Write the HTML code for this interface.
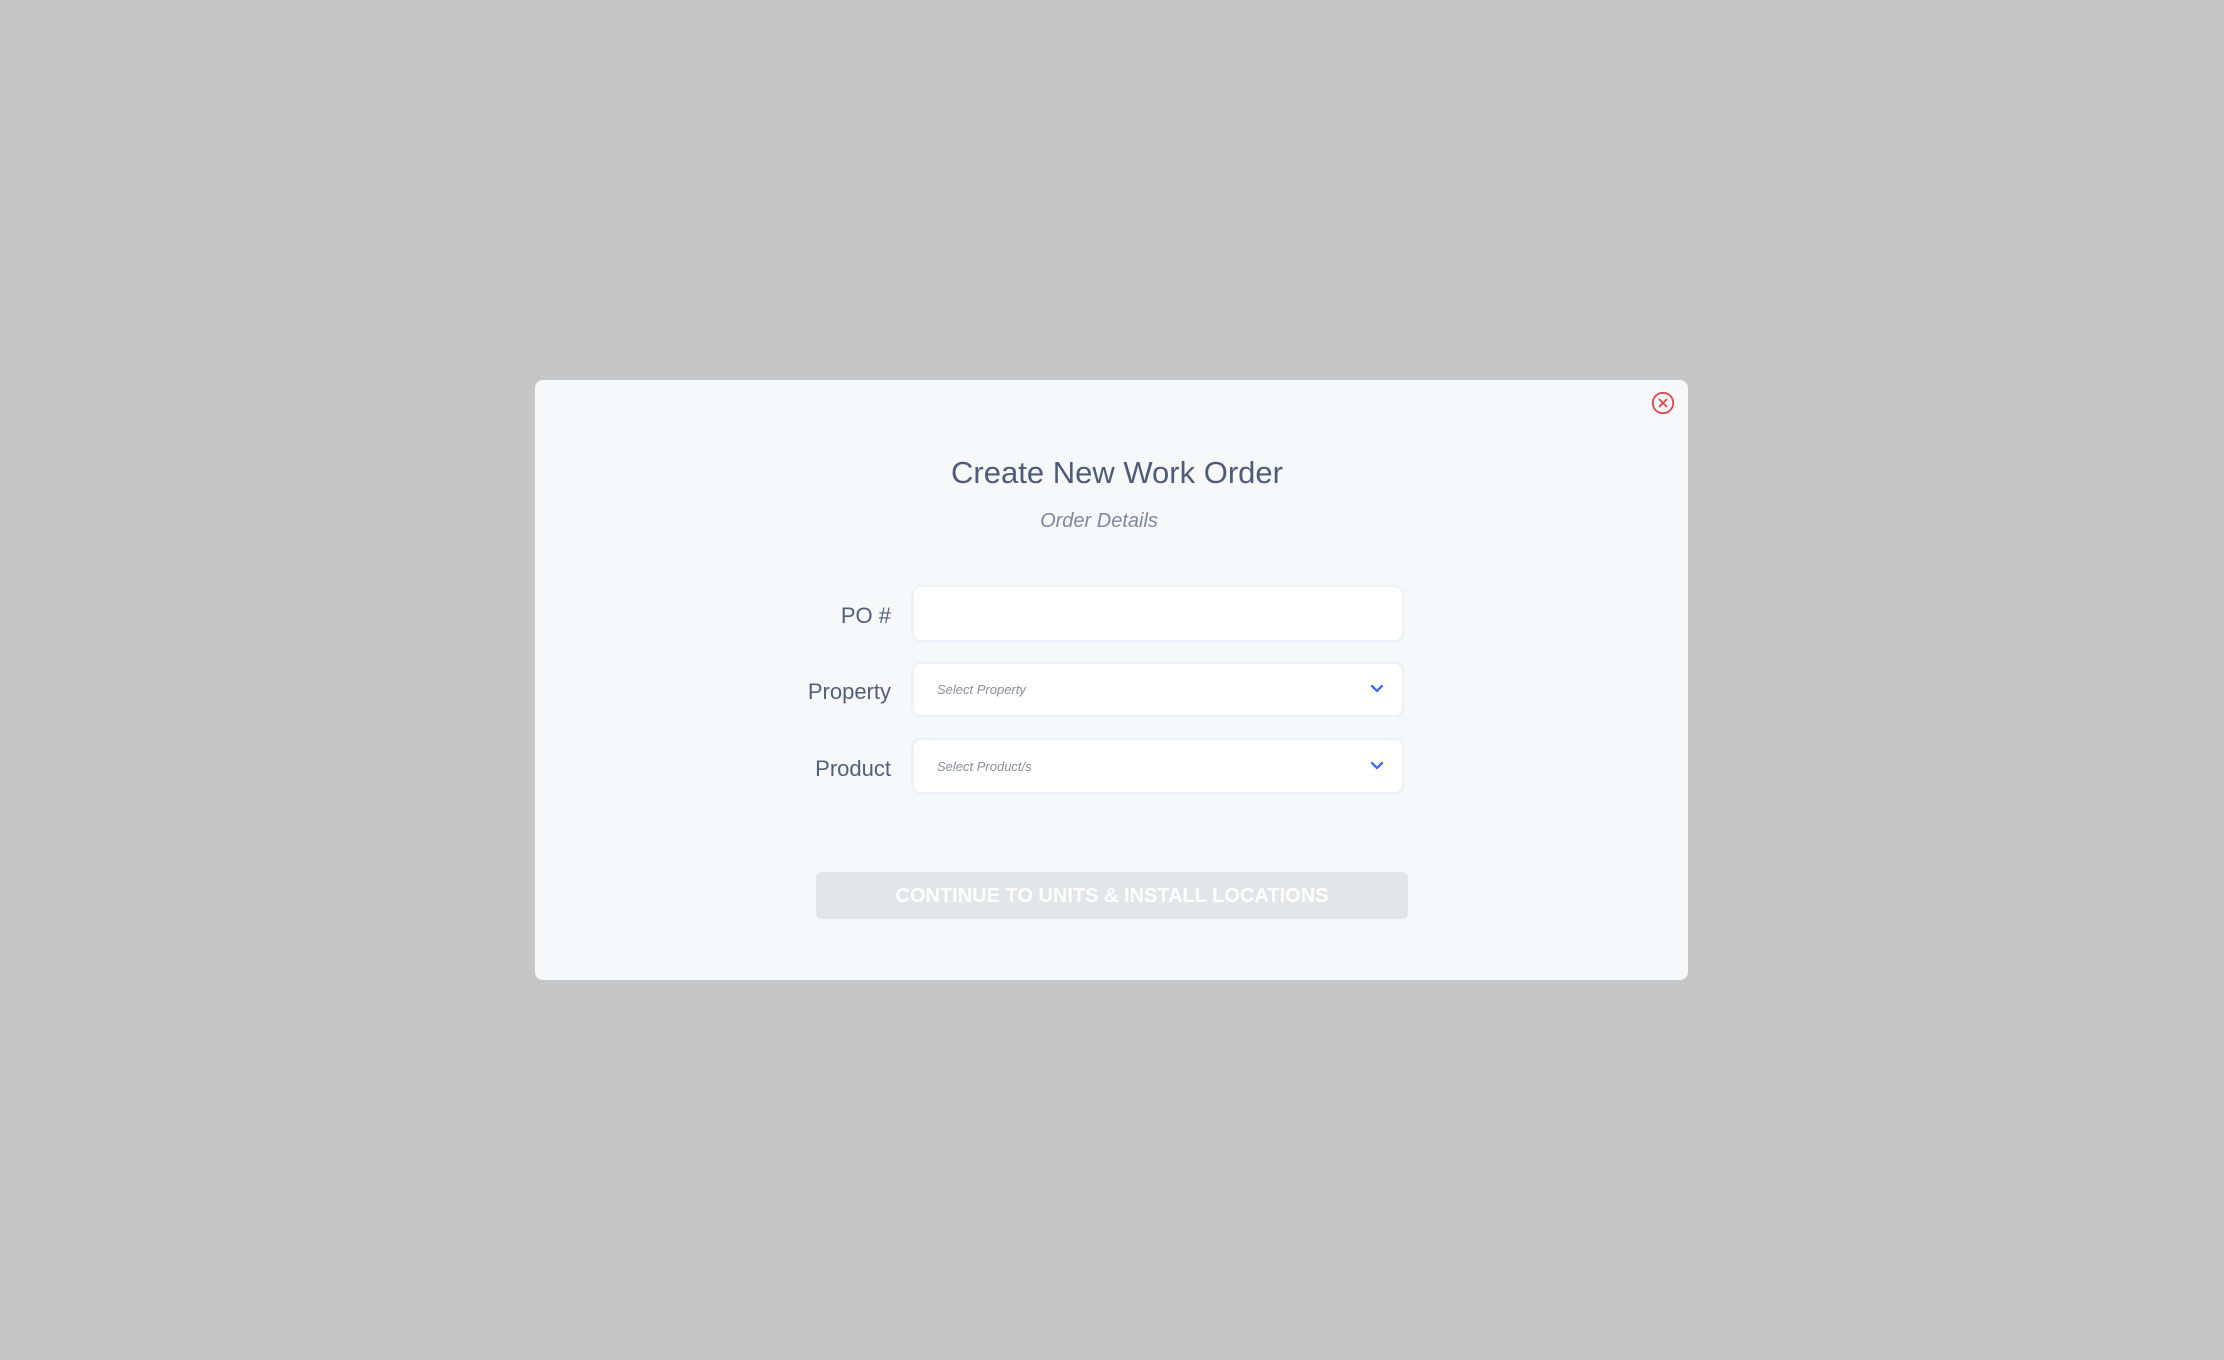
<!DOCTYPE html>
<html><head><meta charset="utf-8"><style>
html,body{margin:0;padding:0;}
body{width:2224px;height:1360px;background:#c6c6c6;position:relative;overflow:hidden;font-family:"Liberation Sans",sans-serif;}
.modal{position:absolute;left:535px;top:380px;width:1153px;height:600px;background:#f7f8fa;border-radius:8px;}
.abs{position:absolute;}
.title{top:455px;text-align:center;font-size:31px;color:#4f5b78;}
.sub{top:510px;text-align:center;font-size:20px;font-style:italic;color:#8088a0;}
.lbl{right:1333px;font-size:22px;color:#535f7a;text-align:right;}
.inp{left:914px;width:488px;background:#fff;border-radius:7px;box-shadow:0 0 3px 1px #e0ebf6;}
.ph{position:absolute;left:23px;font-size:13px;font-style:italic;color:#8a8f9c;}
.chev{position:absolute;left:1363px;}
.btn{left:816px;top:872px;width:592px;height:47px;background:#e3e6e9;border-radius:6px;color:#fff;font-weight:bold;font-size:20px;text-align:center;line-height:49px;letter-spacing:0px;}
</style></head><body>
<div class="modal"></div>
<svg class="abs" style="left:1651px;top:391px" width="24" height="24" viewBox="0 0 24 24"><circle cx="12" cy="12" r="10.2" fill="none" stroke="#e0424b" stroke-width="1.8"/><path d="M8.5 8.5L15.5 15.5M15.5 8.5L8.5 15.5" stroke="#e0424b" stroke-width="1.8" stroke-linecap="round"/></svg>
<div class="abs title" style="left:0;width:2234px">Create New Work Order</div>
<div class="abs sub" style="left:0;width:2198px">Order Details</div>
<div class="abs lbl" style="top:603px">PO #</div>
<div class="abs lbl" style="top:679px">Property</div>
<div class="abs lbl" style="top:756px">Product</div>
<div class="abs inp" style="top:587px;height:53px"></div>
<div class="abs inp" style="top:664px;height:51px"><span class="ph" style="top:18px">Select Property</span></div>
<div class="abs inp" style="top:740px;height:52px"><span class="ph" style="top:19px">Select Product/s</span></div>
<svg class="chev" style="top:683px" width="28" height="12" viewBox="0 0 28 12"><path d="M9 3L14 8L19 3" fill="none" stroke="#4a6cf7" stroke-width="2.4" stroke-linecap="round" stroke-linejoin="round"/></svg>
<svg class="chev" style="top:760px" width="28" height="12" viewBox="0 0 28 12"><path d="M9 3L14 8L19 3" fill="none" stroke="#4a6cf7" stroke-width="2.4" stroke-linecap="round" stroke-linejoin="round"/></svg>
<div class="abs btn">CONTINUE TO UNITS &amp; INSTALL LOCATIONS</div>
</body></html>
